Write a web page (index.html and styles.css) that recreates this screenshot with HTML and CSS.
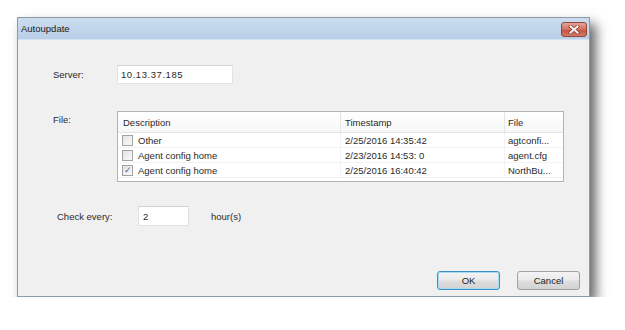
FILE: index.html
```html
<!DOCTYPE html>
<html lang="en">
<head>
    <meta charset="UTF-8">
    <meta name="viewport" content="width=device-width, initial-scale=1.0">
    <title>Autoupdate</title>
    <link rel="stylesheet" href="styles.css">
</head>
<body>
    <div class="window">
        <!-- Title bar -->
        <div class="titlebar">
            <span class="title">Autoupdate</span>
            <div class="close-btn">
                <svg width="12" height="9" viewBox="0 0 12 9">
                    <path d="M2.5 1.5 L9.5 7.5 M9.5 1.5 L2.5 7.5" stroke="#8a3a30" stroke-width="3.4" stroke-linecap="square"/>
                    <path d="M2.5 1.5 L9.5 7.5 M9.5 1.5 L2.5 7.5" stroke="#f4f4f4" stroke-width="2" stroke-linecap="square"/>
                </svg>
            </div>
        </div>

        <div class="content">
            <div class="server-row">
                <span class="label">Server:</span>
                <div class="textbox ip">10.13.37.185</div>
            </div>

            <div class="file-row">
                <span class="label file-label">File:</span>
                <div class="list">
                    <div class="list-head">Description</div>
                    <div class="list-head">Timestamp</div>
                    <div class="list-head">File</div>

                    <div class="cell first"><span class="check"></span>Other</div>
                    <div class="cell">2/25/2016 14:35:42</div>
                    <div class="cell">agtconfi...</div>

                    <div class="cell first"><span class="check"></span>Agent config home</div>
                    <div class="cell">2/23/2016 14:53: 0</div>
                    <div class="cell">agent.cfg</div>

                    <div class="cell first"><span class="check checked">&#10003;</span>Agent config home</div>
                    <div class="cell">2/25/2016 16:40:42</div>
                    <div class="cell">NorthBu...</div>
                </div>
            </div>

            <div class="check-row">
                <span class="label check-label">Check every:</span>
                <div class="textbox hours">2</div>
                <span class="unit">hour(s)</span>
            </div>

            <div class="buttons">
                <div class="btn default">OK</div>
                <div class="btn">Cancel</div>
            </div>
        </div>
    </div>
</body>
</html>
```

FILE: styles.css
```css
body {
    font-family: "Liberation Sans", Arial, sans-serif;
    font-size: 9.5px;
    color: #2a2a2a;
    margin: 0;
    padding: 17px 0 0 17px;
    background-color: #ffffff;
}

.window {
    width: 571px;
    height: 278px;
    border: 1px solid #8d9aaa;
    background-color: #f0f0f0;
    display: flex;
    flex-direction: column;
    box-shadow: 6px 7px 11px rgba(0, 0, 0, 0.6);
}

.titlebar {
    height: 21px;
    display: flex;
    align-items: center;
    justify-content: space-between;
    padding: 0 2px 0 3px;
    background: linear-gradient(#cbdcee, #b9cfe7);
    border-bottom: 1px solid #d6e2ef;
}

.title {
    color: #1a1a1a;
}

.close-btn {
    width: 24px;
    height: 13px;
    margin-top: 1px;
    border: 1px solid #94483d;
    border-radius: 3px;
    background: linear-gradient(#e3a497, #d1705f 50%, #c4523f 51%, #d27866);
    display: flex;
    align-items: center;
    justify-content: center;
}

.content {
    flex: 1;
    display: flex;
    flex-direction: column;
    padding: 25px 9px 5px 35px;
}

.server-row,
.check-row {
    display: flex;
    align-items: center;
}

.label {
    width: 64px;
    flex-shrink: 0;
}

.textbox {
    background-color: #ffffff;
    border: 1px solid #e2e2e2;
    border-top-color: #d2d2d2;
    box-sizing: border-box;
    padding-left: 3px;
    display: flex;
    align-items: center;
}

.ip {
    width: 116px;
    height: 19px;
    letter-spacing: 0.55px;
}

.file-row {
    display: flex;
    align-items: flex-start;
    margin-top: 27px;
}

.file-label {
    padding-top: 3px;
}

.list {
    width: 445px;
    height: 69px;
    border: 1px solid #b4b4b4;
    background-color: #ffffff;
    display: grid;
    grid-template-columns: 223px 164px 58px;
    grid-template-rows: 21px 15px 15px 15px;
    align-content: start;
}

.list-head {
    background: linear-gradient(#ffffff, #f6f7f9);
    border-bottom: 1px solid #e3e4e6;
    border-right: 1px solid #e3e4e6;
    padding-left: 4px;
    display: flex;
    align-items: center;
}

.list-head:first-child {
    padding-left: 5px;
}

.list-head:nth-child(3) {
    border-right: none;
    padding-left: 3px;
}

.cell {
    border-bottom: 1px solid #f2f2f2;
    border-right: 1px solid #f2f2f2;
    padding-left: 4px;
    display: flex;
    align-items: center;
    white-space: nowrap;
    overflow: hidden;
}

.cell:nth-child(3n) {
    border-right: none;
    padding-left: 3px;
}

.cell.first {
    padding-left: 4px;
}

.check {
    width: 9px;
    height: 9px;
    border: 1px solid #a2a2a2;
    background: linear-gradient(135deg, #e2e2e2, #fbfbfb);
    margin-right: 5px;
    display: flex;
    align-items: center;
    justify-content: center;
    color: #4b5f93;
    font-size: 9px;
    line-height: 9px;
}

.check-row {
    margin-top: 24px;
    padding-left: 4px;
}

.check-label {
    width: 81px;
}

.hours {
    width: 51px;
    height: 20px;
    padding-left: 4px;
}

.unit {
    margin-left: 22px;
}

.buttons {
    margin-top: auto;
    margin-bottom: 1px;
    display: flex;
    justify-content: flex-end;
    gap: 17px;
}

.btn {
    width: 63px;
    height: 19px;
    box-sizing: border-box;
    border: 1px solid #a0a0a0;
    border-radius: 3px;
    background: linear-gradient(#f4f4f4, #ebebeb 45%, #dddddd 55%, #d2d2d2);
    display: flex;
    align-items: center;
    justify-content: center;
    color: #222222;
}

.btn.default {
    border-color: #3f8ec0;
    box-shadow: inset 0 0 0 1px #a8dcf4;
}
```
